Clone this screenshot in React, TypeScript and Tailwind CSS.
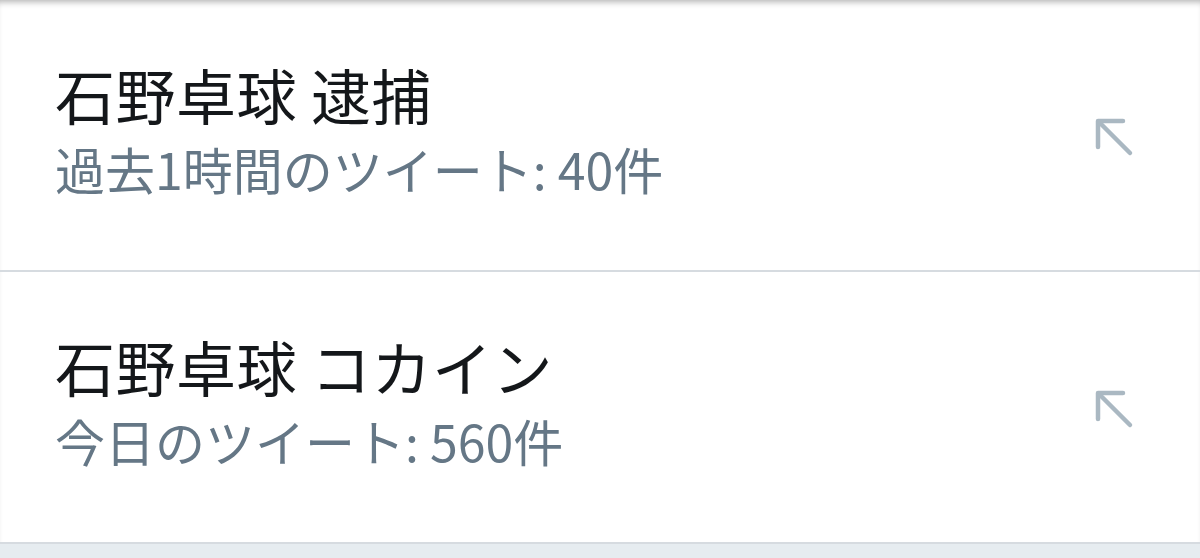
import React from 'react';

type Trend = { title: string; meta: string };

const trends: Trend[] = [
  { title: '石野卓球 逮捕', meta: '過去1時間のツイート: 40件' },
  { title: '石野卓球 コカイン', meta: '今日のツイート: 560件' },
];

// Up-left arrow, drawn to match the pale grey stroke on the right of each row.
const ArrowUpLeft: React.FC = () => (
  <svg width="40" height="40" viewBox="0 0 40 40" fill="none" stroke="#aab8c2" strokeWidth="4.5" strokeLinecap="round" strokeLinejoin="round" className="mt-[4px]">
    <path d="M4 30 V4 H29" />
    <path d="M5 5 L36 36" />
  </svg>
);

const TrendRow: React.FC<{ trend: Trend }> = ({ trend }) => (
  <div className="flex h-[272px] items-center justify-between border-b-2 border-[#d6dbe0] pl-[55px] pr-[66px]">
    <div className="flex flex-col pb-[12px]">
      <span className="text-[60px] leading-[68px] tracking-[0.5px] text-[#14171a]">{trend.title}</span>
      <span className="mt-[10px] text-[50px] leading-[60px] text-[#657786]">{trend.meta}</span>
    </div>
    <ArrowUpLeft />
  </div>
);

export default function App() {
  return (
    <div
      className="flex h-[558px] w-[1200px] flex-col bg-[#e6ecf0]"
      style={{ fontFamily: '"Noto Sans CJK JP", "Noto Sans", sans-serif' }}
    >
      <div className="flex flex-col bg-white shadow-[inset_0_6px_6px_-4px_rgba(0,0,0,0.3)]">
        {trends.map((t) => (
          <TrendRow key={t.title} trend={t} />
        ))}
      </div>
    </div>
  );
}
